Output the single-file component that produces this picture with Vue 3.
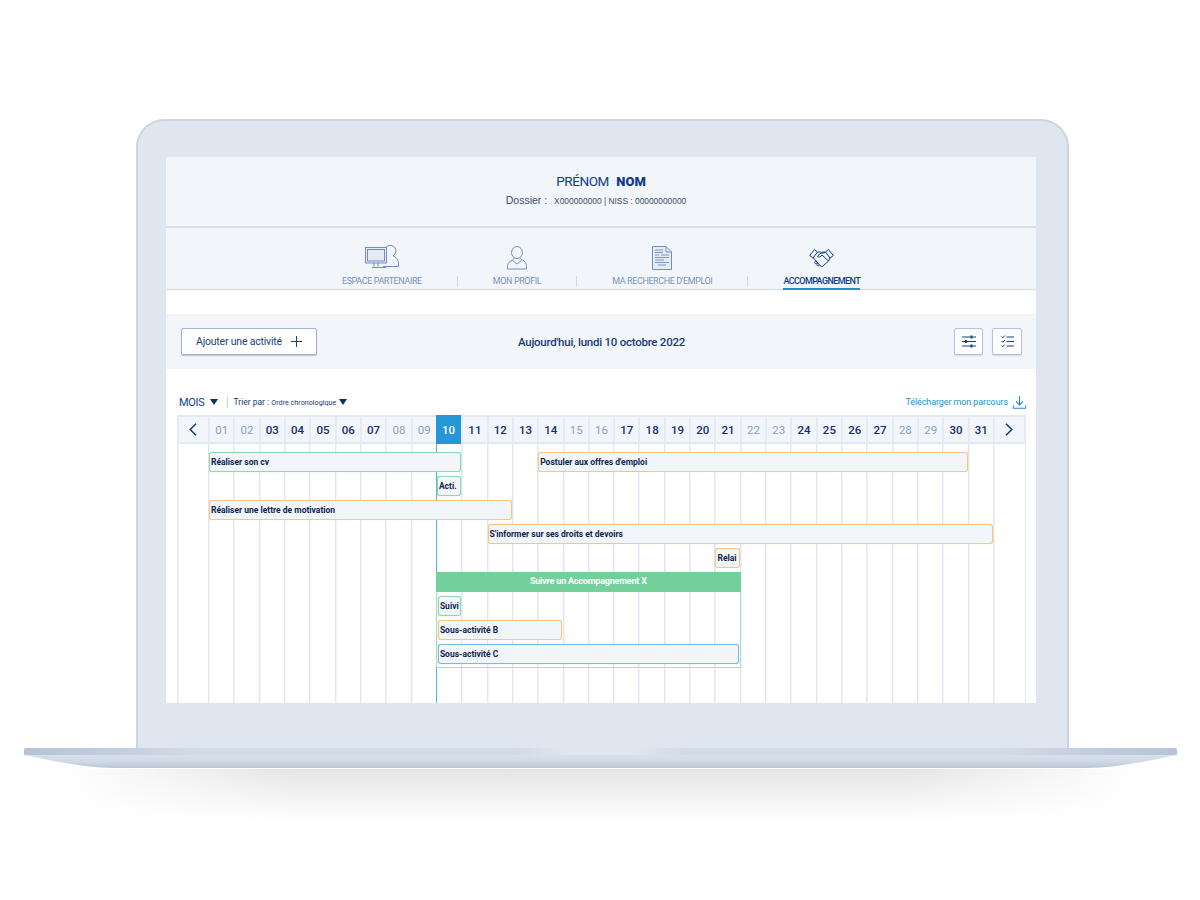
<script setup>
const mutedDays = [1, 2, 8, 9, 15, 16, 22, 23, 28, 29]
const today = 10
const days = Array.from({ length: 31 }, (_, i) => ({
  n: i + 1,
  label: String(i + 1).padStart(2, '0'),
  muted: mutedDays.includes(i + 1),
  today: i + 1 === today
}))

// first and last day of each bar, the row is the grid row
const bars = [
  { label: 'Réaliser son cv', from: 1, to: 10, row: 2, color: 'green' },
  { label: 'Postuler aux offres d\'emploi', from: 14, to: 30, row: 2, color: 'orange' },
  { label: 'Acti.', from: 10, to: 10, row: 3, color: 'green' },
  { label: 'Réaliser une lettre de motivation', from: 1, to: 12, row: 4, color: 'orange' },
  { label: 'S\'informer sur ses droits et devoirs', from: 12, to: 31, row: 5, color: 'orange' },
  { label: 'Relai', from: 21, to: 21, row: 6, color: 'orange' }
]

const subBars = [
  { label: 'Suivi', from: 1, to: 1, color: 'green' },
  { label: 'Sous-activité B', from: 1, to: 5, color: 'orange' },
  { label: 'Sous-activité C', from: 1, to: 12, color: 'blue' }
]

const barPlace = (b) => ({ gridColumn: `${b.from + 1} / ${b.to + 2}`, gridRow: b.row })
const subPlace = (b) => ({ gridColumn: `${b.from} / ${b.to + 1}` })
</script>

<template>
  <div class="page">
    <div class="lid">
      <div class="screen">
        <header class="identity">
          <h1><span>PRÉNOM</span> <strong>NOM</strong></h1>
          <p>Dossier : <small>X000000000 | NISS : 00000000000</small></p>
        </header>

        <nav class="tabs">
          <a class="tab">
            <svg width="34" height="26" viewBox="0 0 34 26" fill="none" stroke="currentColor">
              <path d="M20 4.5a6 6 0 0 1 9.500 -1.500a6 6 0 0 1 -1.500 9c3.500 1 5.500 4 5.500 8v2.500H18" />
              <rect x="0.500" y="3.500" width="21" height="15.500" fill="#e6ebf3" />
              <rect x="2.500" y="5.500" width="17" height="11.500" />
              <path d="M9 19v3.500M13 19v3.500M7 23.500h14" />
            </svg>
            <span>ESPACE PARTENAIRE</span>
          </a>
          <i class="sep"></i>
          <a class="tab">
            <svg width="20" height="24" viewBox="0 0 20 24" fill="none" stroke="currentColor">
              <ellipse cx="10" cy="6.500" rx="5.500" ry="6" />
              <path d="M7 12c0 1 -1 2 -2 2.500c-3 1 -4.500 3 -4.500 6V23h19v-2.500c0 -3.500 -1.500 -5.500 -4.500 -6.500c-1 -.5 -2 -1.500 -2 -2" />
              <path d="M5.500 14.500l4.500 3.500l4.500 -3.500" />
            </svg>
            <span>MON PROFIL</span>
          </a>
          <i class="sep"></i>
          <a class="tab">
            <svg width="20" height="24" viewBox="0 0 20 24" fill="none" stroke="currentColor">
              <path d="M.5 .5H14L19.500 6V23.500H.5z" fill="#e6ebf3" />
              <path d="M14 .5V6h5.500" />
              <path d="M3 4h8M3 6.500h8M3 9h4M9 9h8M3 11.500h14M3 14h9M3 16.500h14M6 19h8" stroke-width="0.900" />
            </svg>
            <span>MA RECHERCHE D'EMPLOI</span>
          </a>
          <i class="sep"></i>
          <a class="tab active">
            <svg width="25" height="24" viewBox="0 0 25 24" fill="none" stroke="currentColor" stroke-linejoin="round">
              <path d="M.7 9.500L5.500 3.500L8.500 6L4 12z" />
              <path d="M24.300 9.500L19.500 3.500L16.500 6L21 12z" />
              <path d="M8.500 6.500c2 -1 3 -.5 4 0c1.500 -.5 2.500 -1 4 -.5" />
              <path d="M16.500 6.500L11 7.500L8.500 10.500c1.500 1 3 .5 4.500 -1.500l6.500 6" />
              <path d="M4.500 12L10.500 19c1 1.500 2.500 2 3.500 1l5.500 -5L21 12" />
              <path d="M7 14.500L5.800 16c-.5 1 .5 2 1.500 1.500L9 16M9 17l-1 1.200c-.5 1 .5 2 1.500 1.500l1 -1" />
            </svg>
            <span>ACCOMPAGNEMENT</span>
          </a>
        </nav>

        <section class="toolbar">
          <button class="add" type="button">
            <span>Ajouter une activité</span>
            <svg width="11" height="11" viewBox="0 0 11 11" stroke="currentColor"><path d="M5.500 0v11M0 5.500h11" /></svg>
          </button>
          <div class="today">Aujourd'hui, lundi 10 octobre 2022</div>
          <div class="tools">
            <button class="tool" type="button">
              <svg width="14" height="13" viewBox="0 0 14 13" fill="none" stroke="#1a3f80">
                <path d="M0 2h14M0 6.500h14M0 11h14" />
                <path d="M9.500 .5v3M4 5v3M9.500 9.500v3" stroke-width="2" />
              </svg>
            </button>
            <button class="tool" type="button">
              <svg width="13" height="13" viewBox="0 0 13 13" fill="none" stroke="#1a3f80">
                <path d="M.5 1.500l1.300 1.300L3.800 .5M.5 6l1.300 1.300L3.800 5M.5 10.500l1.300 1.300L3.800 9.500" />
                <path d="M5.500 2h7.500M5.500 6.500h7.500M5.500 11h7.500" />
              </svg>
            </button>
          </div>
        </section>

        <section class="filters">
          <span class="period">MOIS</span><i class="caret"></i>
          <span class="divider"></span>
          <span class="sort">Trier par : <small>Ordre chronologique</small></span><i class="caret small"></i>
          <a class="download">
            Télécharger mon parcours
            <svg width="13" height="13" viewBox="0 0 13 13" fill="none" stroke="currentColor" stroke-width="1.100">
              <path d="M6.500 0v8.500M3 5.500l3.500 3.500L10 5.500M.3 9v3.300h12.400V9" />
            </svg>
          </a>
        </section>

        <div class="calendar">
          <div class="cal-head">
            <div class="cell arrow">
              <svg width="8" height="13" viewBox="0 0 8 13" fill="none" stroke="#0f3d8a" stroke-width="1.500"><path d="M7 .7L1.200 6.500L7 12.300" /></svg>
            </div>
            <div
              v-for="d in days"
              :key="d.n"
              class="cell"
              :class="{ muted: d.muted, current: d.today }"
            >{{ d.label }}</div>
            <div class="cell arrow">
              <svg width="8" height="13" viewBox="0 0 8 13" fill="none" stroke="#0f3d8a" stroke-width="1.500"><path d="M1 .7L6.800 6.500L1 12.300" /></svg>
            </div>
          </div>

          <div class="chart">
            <i v-for="n in 33" :key="n" class="col-line" :style="{ gridColumn: n }"></i>
            <i class="today-line"></i>

            <div
              v-for="b in bars"
              :key="b.label"
              class="bar"
              :class="b.color"
              :style="barPlace(b)"
            >{{ b.label }}</div>

            <div class="group">
              <div class="group-title">Suivre un Accompagnement X</div>
              <div class="group-rows">
                <div
                  v-for="b in subBars"
                  :key="b.label"
                  class="bar"
                  :class="b.color"
                  :style="subPlace(b)"
                >{{ b.label }}</div>
              </div>
            </div>
          </div>
        </div>
      </div>
    </div>

    <svg class="base" width="1153" height="21" viewBox="0 0 1153 21">
      <defs>
        <linearGradient id="strip" x1="0" x2="1" y1="0" y2="0">
          <stop offset="0" stop-color="#b7c3d2" />
          <stop offset="0.07" stop-color="#bfcddf" />
          <stop offset="0.15" stop-color="#d3dbe6" />
          <stop offset="0.85" stop-color="#d3dbe6" />
          <stop offset="0.93" stop-color="#bfcddf" />
          <stop offset="1" stop-color="#b7c3d2" />
        </linearGradient>
        <linearGradient id="lower" x1="0" x2="0" y1="0" y2="1">
          <stop offset="0" stop-color="#d8e0eb" />
          <stop offset="0.5" stop-color="#d0d9e5" />
          <stop offset="1" stop-color="#b9c5d4" />
        </linearGradient>
        <linearGradient id="notch" x1="0" x2="1" y1="0" y2="0">
          <stop offset="0" stop-color="#cfdae8" />
          <stop offset="0.3" stop-color="#dfe6ef" />
          <stop offset="0.7" stop-color="#dfe6ef" />
          <stop offset="1" stop-color="#cfdae8" />
        </linearGradient>
      </defs>
      <path d="M0 7C30 13 60 20 90 20H1063C1093 20 1123 13 1153 7z" fill="url(#lower)" />
      <path d="M1.500 0H1151.500Q1153 0 1153 1.500V7H0V1.500Q0 0 1.500 0z" fill="url(#strip)" />
      <rect x="491" y="0" width="172" height="7" fill="url(#notch)" />
    </svg>
    <div class="shadow"></div>
  </div>
</template>

<style>
body {
  background: #fff;
}
</style>

<style scoped>
.page {
  width: 1200px;
  height: 900px;
  padding-top: 119px;
  box-sizing: border-box;
  overflow: hidden;
  font-family: Roboto, "Liberation Sans", sans-serif;
  color: #0f3d8a;
}

.lid {
  width: 933px;
  height: 629px;
  margin-left: 136px;
  padding: 36px 0 0 28px;
  box-sizing: border-box;
  background: #e0e6ef;
  border: 2px solid #cbd5e2;
  border-bottom: 0;
  border-radius: 28px 28px 0 0;
}

.screen {
  width: 870px;
  height: 546px;
  overflow: hidden;
  background: #fff;
}

.identity {
  height: 70px;
  padding-top: 15px;
  box-sizing: border-box;
  background: #f2f5f9;
  border-bottom: 1px solid #dbe1ea;
  text-align: center;
}

.identity h1 {
  margin: 0;
  font-size: 13.500px;
  line-height: 18px;
  font-weight: 400;
  color: #0f3d8a;
}

.identity h1 span {
  letter-spacing: -0.4px;
}

.identity h1 strong {
  margin-left: 4px;
  font-size: 13px;
  font-weight: 900;
}

.identity p {
  margin: 3px 0 0;
  padding-right: 10px;
  font-family: "Liberation Sans", sans-serif;
  font-size: 10.500px;
  line-height: 13px;
  color: #3d4f6e;
}

.identity small {
  margin-left: 4px;
  font-size: 8.400px;
}

.tabs {
  display: flex;
  justify-content: center;
  height: 63px;
  background: #f2f5f9;
  border-top: 1px solid #dbe1ea;
  border-bottom: 1px solid #d3dae5;
  box-sizing: border-box;
}

.tab {
  display: flex;
  flex-direction: column;
  align-items: center;
  justify-content: flex-end;
  gap: 5px;
  height: 62px;
  padding-bottom: 1px;
  box-sizing: border-box;
  font-size: 9px;
  line-height: 12px;
  letter-spacing: -0.4px;
  color: #6f8fc4;
  border-bottom: 2px solid transparent;
}

.tab span {
  color: #7a93bd;
}

.tab.active {
  color: #0f3d8a;
  letter-spacing: -0.6px;
  border-bottom-color: #1f8fd3;
}

.tab.active span {
  color: #0f3d8a;
  font-weight: 500;
}

.sep {
  align-self: flex-end;
  width: 1px;
  height: 11px;
  margin: 0 35px 2px;
  background: #d3dae5;
}

.toolbar {
  display: grid;
  grid-template-columns: 1fr auto 1fr;
  align-items: center;
  height: 55px;
  margin-top: 24px;
  padding: 0 14px 0 15px;
  background: #f2f5f9;
}

.add {
  display: flex;
  align-items: center;
  gap: 9px;
  width: 136px;
  height: 27px;
  padding: 0 0 0 14px;
  background: #fff;
  border: 1px solid #a3b6d3;
  border-radius: 2px;
  box-shadow: 0 1px 1px rgba(40, 70, 120, 0.3);
  font-family: inherit;
  font-size: 10.500px;
  letter-spacing: -0.2px;
  white-space: nowrap;
  color: #1a3f80;
}

.today {
  font-size: 11.500px;
  font-weight: 500;
  letter-spacing: -0.25px;
  color: #1b3a78;
}

.tools {
  display: flex;
  justify-content: flex-end;
  gap: 9px;
}

.tool {
  display: flex;
  align-items: center;
  justify-content: center;
  width: 29px;
  height: 27px;
  padding: 0;
  background: #fff;
  border: 1px solid #b3c3da;
  border-radius: 2px;
  box-shadow: 0 1px 1px rgba(40, 70, 120, 0.15);
}

.tool:last-child {
  width: 30px;
}

.filters {
  display: flex;
  align-items: center;
  height: 46px;
  padding: 20px 10px 0 13px;
  box-sizing: border-box;
}

.period {
  font-size: 11px;
  letter-spacing: -0.3px;
  color: #0f3d8a;
}

.caret {
  width: 0;
  height: 0;
  margin-left: 5px;
  border-left: 4.500px solid transparent;
  border-right: 4.500px solid transparent;
  border-top: 6px solid #0e2f66;
}

.caret.small {
  margin-left: 3px;
  border-left-width: 4px;
  border-right-width: 4px;
}

.divider {
  width: 1px;
  height: 11px;
  margin: 0 6px 0 9px;
  background: #c9d3e2;
}

.sort {
  font-size: 8.500px;
  color: #1c3a70;
}

.sort small {
  font-size: 7.200px;
}

.download {
  display: flex;
  align-items: center;
  gap: 5px;
  margin-left: auto;
  font-size: 9px;
  letter-spacing: -0.1px;
  color: #1f8fd3;
}

.calendar {
  width: 849px;
  margin-left: 11px;
}

.cal-head,
.chart {
  display: grid;
  grid-template-columns: 31px repeat(31, 1fr) 33px;
}

.cal-head {
  height: 29px;
  background: #f2f5f9;
  border-top: 2px solid #e3e9f2;
  border-bottom: 2px solid #e3e9f2;
  box-sizing: border-box;
}

.cell {
  display: flex;
  align-items: center;
  justify-content: center;
  border-left: 2px solid #e6ebf3;
  font-size: 11.500px;
  font-weight: 500;
  color: #12306a;
}

.cell:last-child {
  border-right: 2px solid #e6ebf3;
}

.arrow:first-child {
  padding-right: 2px;
}

.cell.muted {
  font-weight: 400;
  color: #8aa0c6;
}

.cell.current {
  margin: -2px 0;
  background: #2596d6;
  border-left: 0;
  color: #fff;
}

.chart {
  grid-template-rows: 8px repeat(11, 24px);
  height: 259px;
  overflow: hidden;
}

.col-line {
  grid-row: 1 / -1;
  border-left: 1px solid #e0e7f1;
  box-shadow: inset 1px 0 0 #f1f4f8;
}

.col-line:nth-of-type(33) {
  border-right: 1px solid #e0e7f1;
}

.today-line {
  grid-column: 11;
  grid-row: 1 / -1;
  border-left: 1px solid #58b3e3;
}

.bar {
  align-self: start;
  height: 20px;
  margin-left: 1px;
  padding-left: 1px;
  box-sizing: border-box;
  overflow: hidden;
  background: #f2f5f9;
  border: 1px solid;
  border-radius: 3px;
  font-size: 8.500px;
  font-weight: 700;
  line-height: 18px;
  white-space: nowrap;
  color: #0e1f4f;
}

.bar.green {
  border-color: #8bd9ad;
  box-shadow: 0 0 1px #8bd9ad;
}

.bar.orange {
  border-color: #f9c67c;
  box-shadow: 0 0 1px #f9c67c;
}

.bar.blue {
  border-color: #72bde8;
  box-shadow: 0 0 1px #72bde8;
}

.group {
  grid-column: 11 / 23;
  grid-row: 7 / 11;
  margin-right: -1px;
  box-sizing: border-box;
  border: 1px solid #a6e0c1;
  border-top: 0;
}

.group-title {
  height: 20px;
  margin: 0 -1px;
  background: #74d09a;
  text-align: center;
  font-size: 9px;
  font-weight: 700;
  line-height: 19px;
  letter-spacing: -0.2px;
  color: #fff;
}

.group-rows {
  display: grid;
  grid-template-columns: repeat(12, 1fr);
  grid-auto-rows: 24px;
  padding-top: 4px;
}

.group-rows .bar {
  margin-right: 1px;
}

.base {
  display: block;
  margin-left: 24px;
}

.shadow {
  width: 1080px;
  height: 52px;
  margin-left: 60px;
  background: linear-gradient(to bottom, #e4e4e4, rgba(255, 255, 255, 0));
  -webkit-mask-image: linear-gradient(to right, transparent, #000 22%, #000 78%, transparent);
  mask-image: linear-gradient(to right, transparent, #000 22%, #000 78%, transparent);
}
</style>
